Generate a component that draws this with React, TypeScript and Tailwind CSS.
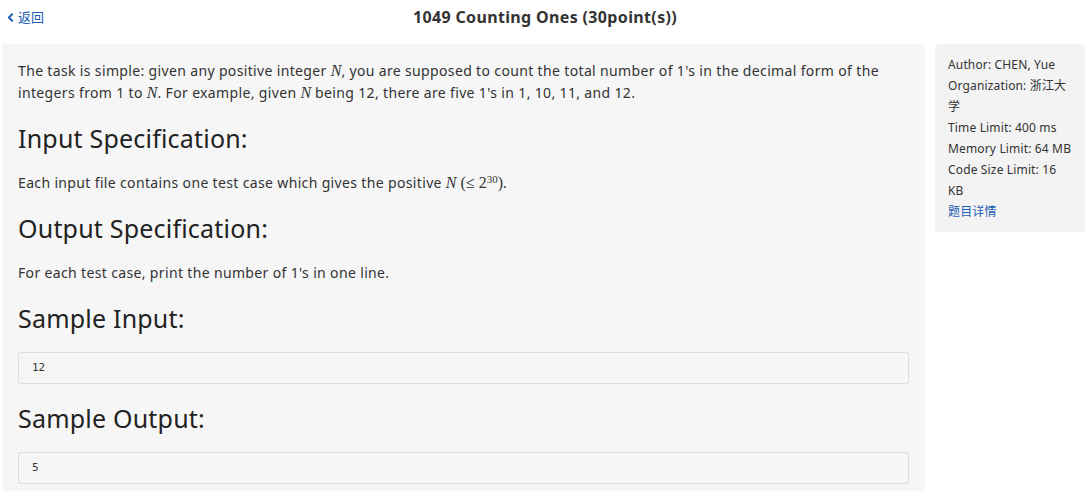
import { ChevronLeft } from "lucide-react";

const sans = { fontFamily: '"Noto Sans", "Noto Sans CJK SC", sans-serif' };

function M({ children }: { children: React.ReactNode }) {
  return <span className="font-['Liberation_Serif',serif] italic text-[16px] tracking-normal">{children}</span>;
}

function Heading({ children }: { children: React.ReactNode }) {
  return <h3 className="text-[25px] leading-[36px] text-[#222] tracking-[0.2px] mt-[16px] mb-[16px]">{children}</h3>;
}

function Code({ children }: { children: React.ReactNode }) {
  return (
    <pre className="h-[32px] border border-[#dcdcdc] rounded-[3px] px-[13px] flex items-center text-[11px] text-[#333] tracking-normal font-['DejaVu_Sans_Mono',monospace]">
      {children}
    </pre>
  );
}

export default function App() {
  return (
    <div className="w-[1090px] h-[491px] bg-white text-[#333] overflow-hidden" style={sans}>
      <header className="h-[34px] relative flex items-center justify-center">
        <a href="#" className="absolute left-[4px] top-[8px] flex items-center text-[13px] text-[#1a5bb4]">
          <ChevronLeft size={13} strokeWidth={3.5} />
          <span className="ml-[1px]">返回</span>
        </a>
        <h1 className="text-[16px] font-bold text-[#333] tracking-[0.35px]">1049 Counting Ones (30point(s))</h1>
      </header>
      <div className="flex mt-[10px]">
        <div className="flex-1 ml-[2px] bg-[#f6f6f6] px-[16px] pt-[16px] pb-[20px] h-[447px] text-[14px] leading-[22px] tracking-[0.35px]">
          <p className="mb-[3px]">
            The task is simple: given any positive integer <M>N</M>, you are supposed to count the total number of 1's in the decimal form of the integers from 1 to <M>N</M>. For example, given <M>N</M> being 12, there are five 1's in 1, 10, 11, and 12.
          </p>
          <Heading>Input Specification:</Heading>
          <p className="mb-[3px]">
            Each input file contains one test case which gives the positive <M>N</M>{" "}
            <span className="font-['Liberation_Serif',serif] text-[16px] tracking-normal">
              (≤ 2<sup className="text-[11px]">30</sup>)
            </span>
            .
          </p>
          <Heading>Output Specification:</Heading>
          <p className="mb-[3px]">For each test case, print the number of 1's in one line.</p>
          <Heading>Sample Input:</Heading>
          <Code>12</Code>
          <Heading>Sample Output:</Heading>
          <Code>5</Code>
        </div>
        <aside className="w-[150px] ml-[10px] mr-[5px] self-start bg-[#f3f3f3] rounded-[4px] pl-[13px] pr-[12px] py-[10px] text-[12px] leading-[21px] tracking-[0.15px] text-[#333]">
          <div>Author: CHEN, Yue</div>
          <div>Organization: 浙江大学</div>
          <div>Time Limit: 400 ms</div>
          <div>Memory Limit: 64 MB</div>
          <div>Code Size Limit: 16 KB</div>
          <a href="#" className="text-[#1a5bb4]">题目详情</a>
        </aside>
      </div>
    </div>
  );
}
